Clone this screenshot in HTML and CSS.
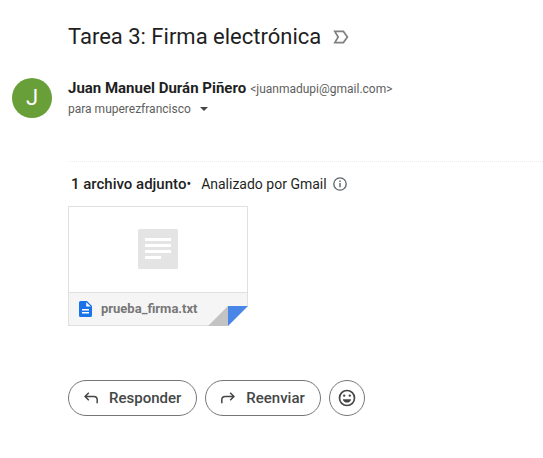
FILE: index.html
```html
<!DOCTYPE html>
<html lang="es">
<head>
<meta charset="utf-8">
<meta name="viewport" content="width=device-width, initial-scale=1">
<title>Tarea 3: Firma electrónica</title>
<link rel="stylesheet" href="styles.css">
</head>
<body>
<main class="message">
  <header class="subject">
    <h1 class="subject-title">Tarea 3: Firma electrónica</h1>
    <button class="icon-button" type="button" aria-label="Importante">
      <svg width="16" height="14" viewBox="0 0 16 14" fill="none" stroke="#808080" stroke-width="1.7"><path d="M1.8 1.4H10.4L14.4 7L10.4 12.6H1.8L5.2 7Z"/></svg>
    </button>
  </header>

  <section class="sender">
    <div class="avatar">J</div>
    <div class="sender-info">
      <div class="sender-line"><span class="sender-name">Juan Manuel Durán Piñero</span><span class="sender-email">&lt;juanmadupi@gmail.com&gt;</span></div>
      <button class="recipient" type="button">para muperezfrancisco
        <svg width="8" height="4" viewBox="0 0 8 4"><path d="M0 0H8L4 4Z" fill="#444746"/></svg>
      </button>
    </div>
  </section>

  <section class="attachments">
    <div class="attachments-head">
      <strong class="count">1 archivo adjunto</strong><span class="dot">•</span>
      <span class="scanned">Analizado por Gmail</span>
      <button class="icon-button" type="button" aria-label="Información">
        <svg width="14" height="14" viewBox="0 0 14 14" fill="none" stroke="#5f6368"><circle cx="7" cy="7" r="6.2" stroke-width="1.3"/><path d="M7 6.1V10.2M7 3.6V5" stroke-width="1.4"/></svg>
      </button>
    </div>
    <a class="card" href="#">
      <span class="preview">
        <svg width="40" height="40" viewBox="0 0 40 40"><rect width="40" height="40" rx="1.5" fill="#e4e4e4"/><path d="M7 9H33V12H7ZM7 15H33V18H7ZM7 21H33V24H7ZM7 27H23V30H7Z" fill="#fff"/></svg>
      </span>
      <span class="file">
        <svg width="13" height="16" viewBox="0 0 13 16"><path d="M1.6 0H8L13 5V14.4A1.6 1.6 0 0 1 11.4 16H1.6A1.6 1.6 0 0 1 0 14.4V1.6A1.6 1.6 0 0 1 1.6 0Z" fill="#1a73e8"/><path d="M7.2 1.2V5.6H11.8ZM3 8H10V9.4H3ZM3 11H10V12.4H3Z" fill="#fff"/></svg>
        <span class="file-name">prueba_firma.txt</span>
      </span>
      <svg class="fold" width="40" height="20" viewBox="0 0 40 20"><path d="M40 0V20H20Z" fill="#fff"/><path d="M0 20L20 0V20Z" fill="#c3c3c3"/><path d="M20 0H40L20 20Z" fill="#4986e7"/></svg>
    </a>
  </section>

  <footer class="actions">
    <button class="action" type="button">
      <svg width="14" height="12" viewBox="0 0 14 12" fill="none" stroke="#444746" stroke-width="1.5"><path d="M4.8 .8L1.1 4.5L4.8 8.2M1.1 4.5H9.8Q13.2 4.5 13.2 7.9V11.2"/></svg>
      Responder
    </button>
    <button class="action" type="button">
      <svg width="14" height="12" viewBox="0 0 14 12" fill="none" stroke="#444746" stroke-width="1.5"><path d="M9.2 .8L12.9 4.5L9.2 8.2M12.9 4.5H4.2Q.8 4.5 .8 7.9V11.2"/></svg>
      Reenviar
    </button>
    <button class="action action-round" type="button" aria-label="Añadir reacción">
      <svg width="18" height="18" viewBox="0 0 18 18"><circle cx="9" cy="9" r="7.5" fill="none" stroke="#444746" stroke-width="1.7"/><circle cx="6.2" cy="6.6" r="1.2" fill="#444746"/><circle cx="11.8" cy="6.6" r="1.2" fill="#444746"/><path d="M4.8 10.2H13.2Q12.3 13.6 9 13.6Q5.7 13.6 4.8 10.2Z" fill="#444746"/></svg>
    </button>
  </footer>
</main>
</body>
</html>
```
FILE: styles.css
```css
* {
  box-sizing: border-box;
}

body {
  margin: 0;
  background: #fff;
  color: #1f1f1f;
  font-family: Roboto, "Liberation Sans", sans-serif;
  font-size: 14px;
  line-height: 20px;
}

button {
  margin: 0;
  padding: 0;
  border: 0;
  background: none;
  font: inherit;
  color: inherit;
  cursor: pointer;
}

svg {
  display: block;
  flex: none;
}

.message {
  padding: 23px 0 40px 68px;
}

.subject {
  display: flex;
  align-items: center;
  gap: 12px;
}

.subject-title {
  margin: 0;
  font-size: 22px;
  font-weight: 400;
  line-height: 28px;
}

.icon-button {
  display: flex;
}

.sender {
  display: flex;
  gap: 16px;
  margin: 27px 0 0 -56px;
}

.avatar {
  flex: none;
  width: 40px;
  height: 40px;
  border-radius: 50%;
  background: #689f38;
  color: #fff;
  font-size: 22px;
  line-height: 40px;
  text-align: center;
}

.sender-line {
  display: flex;
  align-items: baseline;
  gap: 4px;
}

.sender-name {
  font-size: 15px;
  font-weight: 700;
}

.sender-email,
.recipient {
  color: #5e5e5e;
  font-size: 12px;
}

.recipient {
  display: flex;
  align-items: center;
  gap: 9px;
}

.attachments {
  margin-top: 42px;
  padding-top: 12px;
  border-top: 1px dotted #ececec;
}

.attachments-head {
  display: flex;
  align-items: center;
  padding-left: 3px;
}

.count {
  font-size: 15px;
  font-weight: 500;
}

.scanned {
  margin: 0 6px 0 10px;
}

.card {
  position: relative;
  display: block;
  width: 180px;
  margin-top: 12px;
  border: 1px solid #e0e0e0;
  color: #777;
  text-decoration: none;
}

.preview {
  display: flex;
  align-items: flex-start;
  justify-content: center;
  height: 85px;
  padding-top: 22px;
}

.file {
  display: flex;
  align-items: center;
  gap: 9px;
  height: 33px;
  padding-left: 10px;
  border-top: 1px solid #e0e0e0;
  background: #f5f5f5;
}

.file-name {
  font-size: 13px;
  font-weight: 700;
}

.fold {
  position: absolute;
  right: -1px;
  bottom: -1px;
}

.actions {
  display: flex;
  gap: 8px;
  margin-top: 54px;
}

.action {
  display: flex;
  align-items: center;
  justify-content: center;
  gap: 11px;
  height: 36px;
  padding: 0 15px;
  border: 1px solid #747775;
  border-radius: 18px;
  color: #444746;
  font-size: 15px;
  font-weight: 500;
}

.action-round {
  width: 36px;
  padding: 0;
}
```
